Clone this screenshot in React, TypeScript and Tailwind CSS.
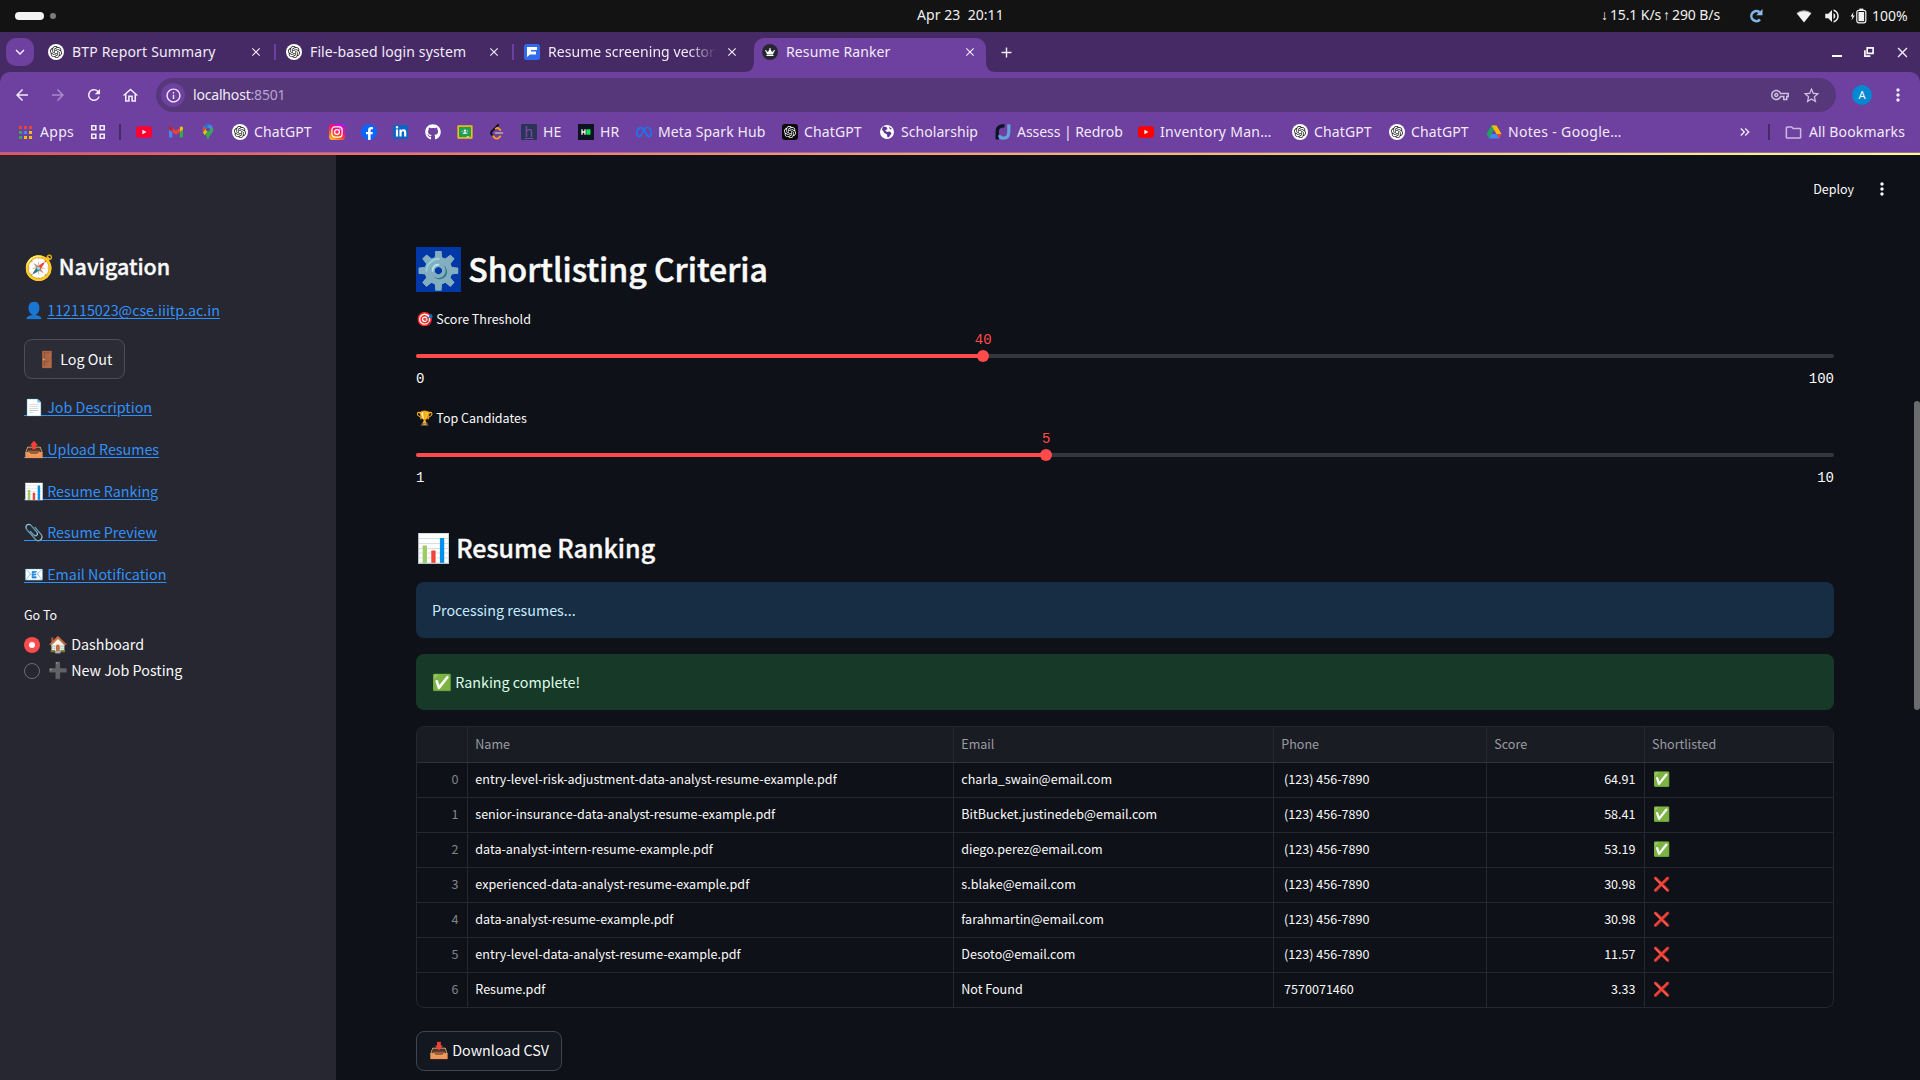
import React from "react";
import { SiOpenai, SiMeta } from "react-icons/si";
import { FaGithub, FaFacebookF, FaLinkedinIn, FaCrown } from "react-icons/fa";
import {
  MdArrowBack,
  MdArrowForward,
  MdRefresh,
  MdOutlineHome,
  MdInfoOutline,
  MdStarBorder,
  MdOutlineVpnKey,
  MdMoreVert,
  MdClose,
  MdAdd,
  MdExpandMore,
  MdVolumeUp,
  MdOutlineFolder,
  MdKeyboardDoubleArrowRight,
} from "react-icons/md";

const UI = "font-['Noto_Sans',sans-serif]";
const APP = "font-['Noto_Sans_CJK_SC',sans-serif]";

/* ---------- site icons ---------- */

function GptIcon() {
  return (
    <span className="flex size-4 shrink-0 items-center justify-center rounded-full bg-white text-[#222]">
      <SiOpenai size={12} />
    </span>
  );
}

function GptDarkIcon() {
  return (
    <span className="flex size-4 shrink-0 items-center justify-center rounded-[3px] bg-[#0b0b0b] text-white">
      <SiOpenai size={12} />
    </span>
  );
}

function FIcon() {
  return (
    <svg viewBox="0 0 16 16" className="size-4 shrink-0">
      <rect width="16" height="16" rx="2.5" fill="#2f6bea" />
      <path d="M3 3h10v3H7v1.5h5v3H6L3 13z" fill="#fff" />
    </svg>
  );
}

function YoutubeIcon({ fill }: { fill: string }) {
  return (
    <svg viewBox="0 0 16 16" className="size-4 shrink-0">
      <rect y="2.3" width="16" height="11.4" rx="2.8" fill={fill} />
      <path d="M6.4 5.7v4.6l4-2.3z" fill="#fff" />
    </svg>
  );
}

function GmailIcon() {
  return (
    <svg viewBox="0 0 16 16" className="size-4 shrink-0">
      <path d="M1 5v7.500c0 .6.4 1 1 1h2.300V7.200z" fill="#4285f4" />
      <path d="M15 5v7.500c0 .6-.4 1-1 1h-2.300V7.200z" fill="#34a853" />
      <path d="M11.700 4v4L15 5.500V4.200c0-1.500-1.600-2.200-2.700-1.300z" fill="#fbbc04" />
      <path d="M4.300 8V4L8 6.800 11.700 4v4L8 10.800z" fill="#ea4335" />
      <path d="M1 4.200v1.300L4.300 8V4l-.6-1.100C2.600 2 1 2.700 1 4.200z" fill="#c5221f" />
    </svg>
  );
}

function MapsIcon() {
  return (
    <svg viewBox="0 0 16 16" className="size-4 shrink-0">
      <path d="M8 .3a5.300 5.300 0 0 1 5.300 5.300c0 4-3.800 4.700-4.700 9.400-.1.700-1.100.7-1.200 0C6.500 10.500 2.700 9.600 2.700 5.600A5.300 5.300 0 0 1 8 .3z" fill="#34a853" />
      <path d="M3.900 2.200 6.600 4.400 2.900 7.200C2.500 5.400 2.800 3.600 3.900 2.200z" fill="#ea4335" />
      <path d="M9.500.5c-2.200-.6-4.400.2-5.600 1.700l2.600 2.200z" fill="#1a73e8" />
      <path d="M9.500.5 6.500 4.300a2 2 0 0 1 3.100 2.500l2.900-3.700A5.300 5.300 0 0 0 9.500.5z" fill="#4285f4" />
      <path d="M6.400 6.900a2 2 0 0 1 .2-2.500L3 8.500c.4 1 1 1.700 1.600 2.500l4.900-5.900a2 2 0 0 1-3.100 1.800z" fill="#fbbc04" />
      <circle cx="8" cy="5.600" r="1.900" fill="#6e40a0" />
    </svg>
  );
}

function InstagramIcon() {
  return (
    <svg viewBox="0 0 16 16" className="size-4 shrink-0">
      <defs>
        <linearGradient id="insta" x1="0.2" y1="1" x2="0.75" y2="0">
          <stop offset="0" stopColor="#ffc21f" />
          <stop offset="0.3" stopColor="#ff5a20" />
          <stop offset="0.6" stopColor="#ff0f6e" />
          <stop offset="1" stopColor="#c20fe8" />
        </linearGradient>
      </defs>
      <rect width="16" height="16" rx="3.500" fill="url(#insta)" />
      <rect x="2.900" y="2.900" width="10.200" height="10.200" rx="3" fill="none" stroke="#fff" strokeWidth="1.200" />
      <circle cx="8" cy="8" r="2.400" fill="none" stroke="#fff" strokeWidth="1.200" />
      <circle cx="10.900" cy="5.100" r=".7" fill="#fff" />
    </svg>
  );
}

function FacebookIcon() {
  return (
    <span className="flex size-4 shrink-0 items-end justify-center overflow-hidden rounded-full bg-[#0866ff] text-white">
      <FaFacebookF size={13} />
    </span>
  );
}

function LinkedinIcon() {
  return (
    <span className="flex h-[14px] w-[15px] shrink-0 items-center justify-center rounded-[1px] bg-[#0a66c2] text-white">
      <FaLinkedinIn size={12} />
    </span>
  );
}

function ClassroomIcon() {
  return (
    <svg viewBox="0 0 16 16" className="size-4 shrink-0">
      <rect x=".4" y="1.300" width="15.200" height="13.400" rx="1" fill="#fbbc04" />
      <rect x="2" y="2.900" width="12" height="10.200" fill="#1e9e58" />
      <circle cx="8" cy="6.600" r="1.200" fill="#fff" />
      <path d="M5.500 9.800c0-1 1.300-1.600 2.500-1.600s2.500.6 2.500 1.600z" fill="#fff" />
      <circle cx="5.300" cy="7.300" r=".8" fill="#8dd0ac" />
      <circle cx="10.700" cy="7.300" r=".8" fill="#8dd0ac" />
      <rect x="9.500" y="12.400" width="3" height=".8" fill="#eee" />
    </svg>
  );
}

function LeetcodeIcon() {
  return (
    <svg viewBox="0 0 16 16" className="size-4 shrink-0" fill="none" strokeLinecap="round">
      <path d="M9.200 1 2.700 7.400c-.9.9-.9 2.200 0 3.100L4 12" stroke="#111" strokeWidth="1.900" />
      <path d="M11.300 6 9.800 4.600C9 3.800 7.700 3.800 6.800 4.600" stroke="#ffa116" strokeWidth="1.800" />
      <path d="M4.200 12.200 5.700 13.800c1 1.100 2.900 1.100 4 0l1.500-1.500" stroke="#ffa116" strokeWidth="1.900" />
      <path d="M6.500 9h7" stroke="#b3b3b3" strokeWidth="1.600" />
    </svg>
  );
}

function HackerEarthIcon() {
  return (
    <span className="flex size-4 shrink-0 items-center justify-center rounded-[1px] bg-[#2c3454] text-[14px] leading-none text-[#7a4bb0] underline">
      h
    </span>
  );
}

function HackerRankIcon() {
  return (
    <svg viewBox="0 0 16 16" className="size-4 shrink-0">
      <rect width="16" height="16" fill="#0b141f" />
      <path d="M4 5.300v5.400M7 5.300v5.400M4 8h3" stroke="#fff" strokeWidth="1.300" />
      <rect x="8.300" y="5.300" width="4.200" height="5.400" fill="#1be35a" />
    </svg>
  );
}

function ScholarshipIcon() {
  return (
    <svg viewBox="0 0 16 16" className="size-4 shrink-0">
      <circle cx="8" cy="8" r="7" fill="#fff" />
      <path d="M4 2.500 7.500 3l1 2L6 6.500 8 8l3-.5 1.500 2L10 13l-1.500.5L8 10.500 5.500 9 3 5.500z" fill="#5b3590" />
      <path d="M10 2.500 13 5l-2 .5z" fill="#5b3590" />
    </svg>
  );
}

function RedrobIcon() {
  return (
    <svg viewBox="0 0 16 16" className="size-4 shrink-0" fill="none">
      <path d="M2.200 15.500V7.500C2.200 3.500 4.500 1.800 9.500 1.800" stroke="#0c1424" strokeWidth="3.400" />
      <path d="M13.800.3V8c0 4.200-2.300 6.200-5.300 6.200-2.400 0-3.800-1.300-3.800-3" stroke="#62a3dc" strokeWidth="3.200" />
    </svg>
  );
}

function DriveIcon() {
  return (
    <svg viewBox="0 0 16 16" className="size-4 shrink-0">
      <path d="M5.500 1.500h5L8 6 3 14.300.5 10z" fill="#1ea362" />
      <path d="M5.500 1.500h5l5 8.500h-5z" fill="#ffba00" />
      <path d="M5.500 10h10L13 14.500H3z" fill="#4285f4" />
      <path d="M10.700 10h4.800L13 14.300z" fill="#ea4335" />
    </svg>
  );
}

/* ---------- desktop bar ---------- */

function SystemBar() {
  return (
    <div className={`flex h-8 items-center bg-[#131313] text-[14px] text-[#f0f0f0] ${UI}`}>
      <div className="flex w-[917px] items-center gap-[6px] pl-[15px]">
        <span className="h-2 w-[29px] rounded-full bg-[#f4f4f4]" />
        <span className="size-[6px] rounded-full bg-[#7d7d7d]" />
      </div>
      <div className="w-[684px] pb-[3px] tracking-[0.050px] whitespace-pre">Apr 23  20:11</div>
      <div className="flex w-[148px] gap-[2px] pb-[3px] tracking-[-0.1px] whitespace-nowrap">
        <span>↓</span>
        <span>15.1 K/s</span>
        <span>↑</span>
        <span>290 B/s</span>
      </div>
      <svg viewBox="0 0 14 14" className="w-[14px]">
        <path d="M11 10.500A5 5 0 1 1 10.500 3.200" fill="none" stroke="#7fb2e5" strokeWidth="2.600" />
        <path d="M13.500 0v6.300H7.200z" fill="#8fbcea" />
      </svg>
      <svg viewBox="0 0 16 14" className="ml-[33px] w-4" fill="#f4f4f4">
        <path d="M8 13.500.8 4.500C4.800 1 11.200 1 15.200 4.500z" />
        <path d="M.8 4.500C4.800 1 11.200 1 15.200 4.500" fill="none" stroke="#bbb" />
      </svg>
      <MdVolumeUp size={18} className="ml-[11px]" />
      <svg viewBox="0 0 17 16" className="ml-[9px] w-[17px]">
        <path d="M3.500 4 .5 8.500h2L1.500 12.500l3.300-5h-2z" fill="#f4f4f4" />
        <rect x="6.800" y="2.300" width="9" height="12.500" rx="2" fill="none" stroke="#f4f4f4" strokeWidth="1.200" />
        <rect x="8.500" y="4" width="5.600" height="9.200" fill="#f4f4f4" />
        <rect x="9.300" y=".6" width="4" height="1.500" fill="#f4f4f4" />
      </svg>
      <span className="ml-[5px] pb-[2px]">100%</span>
    </div>
  );
}

/* ---------- browser chrome ---------- */

function TabStrip() {
  return (
    <div className="flex h-10 bg-[#462a66] pt-[6px] text-[14px] tracking-[0.12px] text-[#f1ebf7]">
      <div className="ml-[6px] flex size-7 items-center justify-center rounded-[10px] bg-[#6e40a0]">
        <MdExpandMore size={18} />
      </div>
      <div className="ml-[14px] flex h-7 w-[228px] items-center">
        <GptIcon />
        <span className="ml-2 w-[177px] pb-[2px] tracking-[0.18px]">BTP Report Summary</span>
        <MdClose size={14} className="shrink-0" />
        <span className="ml-[11px] h-4 w-[2px] bg-[#6e40a0]" />
      </div>
      <div className="ml-[10px] flex h-7 w-[228px] items-center">
        <GptIcon />
        <span className="ml-2 w-[177px] pb-[2px]">File-based login system</span>
        <MdClose size={14} className="shrink-0" />
        <span className="ml-[11px] h-4 w-[2px] bg-[#6e40a0]" />
      </div>
      <div className="ml-[10px] flex h-7 w-[220px] items-center">
        <FIcon />
        <span className="mr-[7px] ml-2 w-[170px] [mask-image:linear-gradient(to_right,black_83%,transparent_99%)] pb-[2px] tracking-[0.060px] whitespace-nowrap">
          Resume screening vector
        </span>
        <MdClose size={14} className="shrink-0" />
      </div>
      <svg viewBox="0 0 10 34" className="h-[34px] w-[10px] shrink-0">
        <path d="M0 34q10 0 10-10v10z" fill="#6e40a0" />
      </svg>
      <div className="flex h-[34px] w-[232px] shrink-0 items-center rounded-t-[10px] bg-[#6e40a0] pb-[6px] pl-2">
        <span className="flex size-4 items-center justify-center rounded-full bg-[#262730] text-white">
          <FaCrown size={10} />
        </span>
        <span className="ml-2 w-[177px] pb-[2px]">Resume Ranker</span>
        <MdClose size={14} />
      </div>
      <svg viewBox="0 0 10 34" className="h-[34px] w-[10px] shrink-0">
        <path d="M10 34q-10 0-10-10v10z" fill="#6e40a0" />
      </svg>
      <MdAdd size={17} className="mt-[6px] ml-[2px]" />
      <div className="mt-[6px] mr-[9px] ml-auto flex items-start">
        <span className="mt-[11px] h-[2px] w-[10px] bg-white" />
        <svg viewBox="0 0 11 11" className="mt-[3px] ml-[22px] w-[10px]" fill="none" stroke="#fff" strokeWidth="1.800">
          <path d="M3.500 1h6.500v6h-6.500z" />
          <path d="M1 3.500v6.500h6" />
        </svg>
        <MdClose size={17} className="ml-[20px]" />
      </div>
    </div>
  );
}

function AddressBar() {
  return (
    <div className="bg-[#462a66]">
      <div className="flex h-10 items-start rounded-t-[10px] bg-[#6e40a0] pt-[6px] text-[#f1ebf7]">
        <div className="flex h-[34px] w-[156px] items-center pl-[13px]">
          <MdArrowBack size={18} />
          <MdArrowForward size={18} className="ml-[18px] text-[#a98bcb]" />
          <MdRefresh size={18} className="ml-[18px]" />
          <MdOutlineHome size={19} className="ml-[18px]" />
        </div>
        <div className="flex h-[34px] w-[1680px] items-center rounded-full bg-[#56387a] pr-[15px] pl-[5px]">
          <span className="flex size-6 items-center justify-center rounded-full bg-[#6e40a0]">
            <MdInfoOutline size={17} />
          </span>
          <span className="ml-2 pb-[2px] text-[14px] tracking-[-0.180px]">
            localhost<span className="text-[#b8a3cf]">:8501</span>
          </span>
          <MdOutlineVpnKey size={18} className="ml-auto text-[#cdbfdd]" />
          <MdStarBorder size={19} className="ml-[13px] text-[#cdbfdd]" />
        </div>
        <span className="mt-[7px] ml-4 flex size-5 items-center justify-center rounded-full bg-[#0288d1] text-[11px] text-white">
          A
        </span>
        <MdMoreVert size={20} className="mt-[7px] ml-4" />
      </div>
    </div>
  );
}

function AppsGrid() {
  const colors = ["#ea4335", "#ea4335", "#ea4335", "#34a853", "#4285f4", "#fbbc04", "#34a853", "#fbbc04", "#fbbc04"];
  return (
    <span className="grid w-[13px] grid-cols-3 gap-[2px]">
      {colors.map((c, i) => (
        <span key={i} className="size-[3px]" style={{ backgroundColor: c }} />
      ))}
    </span>
  );
}

const bookmarks: { icon: React.ReactNode; label?: string; width: string }[] = [
  { icon: <YoutubeIcon fill="#ff0033" />, width: "w-8" },
  { icon: <GmailIcon />, width: "w-8" },
  { icon: <MapsIcon />, width: "w-8" },
  { icon: <GptIcon />, label: "ChatGPT", width: "w-[97px]" },
  { icon: <InstagramIcon />, width: "w-8" },
  { icon: <FacebookIcon />, width: "w-8" },
  { icon: <LinkedinIcon />, width: "w-8" },
  { icon: <FaGithub size={16} color="#fff" />, width: "w-8" },
  { icon: <ClassroomIcon />, width: "w-8" },
  { icon: <LeetcodeIcon />, width: "w-8" },
  { icon: <HackerEarthIcon />, label: "HE", width: "w-[57px]" },
  { icon: <HackerRankIcon />, label: "HR", width: "w-[58px]" },
  { icon: <SiMeta size={16} color="#1877f2" className="shrink-0" />, label: "Meta Spark Hub", width: "w-[146px]" },
  { icon: <GptDarkIcon />, label: "ChatGPT", width: "w-[97px]" },
  { icon: <ScholarshipIcon />, label: "Scholarship", width: "w-[116px] tracking-[0.060px]" },
  { icon: <RedrobIcon />, label: "Assess | Redrob", width: "w-[143px] tracking-[-0.050px]" },
  { icon: <YoutubeIcon fill="#ff0000" />, label: "Inventory Man…", width: "w-[154px] tracking-[0.300px]" },
  { icon: <GptIcon />, label: "ChatGPT", width: "w-[97px]" },
  { icon: <GptIcon />, label: "ChatGPT", width: "w-[97px]" },
  { icon: <DriveIcon />, label: "Notes - Google…", width: "w-[252px] tracking-[0.320px]" },
];

function BookmarksBar() {
  return (
    <div className="flex h-[41px] items-center border-b border-[#8e6cb5] bg-[#6e40a0] text-[14px] tracking-[0.120px] whitespace-nowrap text-[#f1ebf7]">
      <div className="flex w-[91px] items-center gap-2 pl-[19px]">
        <AppsGrid />
        <span className="pb-[2px] tracking-[0.300px]">Apps</span>
      </div>
      <svg viewBox="0 0 14 14" className="w-[14px]" fill="none" stroke="#f1ebf7" strokeWidth="1.600">
        <path d="M.8.8h4v4h-4zM9.200.8h4v4h-4zM.8 9.200h4v4h-4zM9.200 9.200h4v4h-4z" />
      </svg>
      <span className="mr-[13px] ml-[14px] h-4 w-[2px] bg-[#462a66]" />
      <div className="flex pl-[2px]">
        {bookmarks.map((b, i) => (
          <div key={i} className={`flex shrink-0 items-center gap-[6px] ${b.width}`}>
            {b.icon}
            {b.label && <span className="pb-[2px]">{b.label}</span>}
          </div>
        ))}
      </div>
      <MdKeyboardDoubleArrowRight size={16} className="-ml-[1px]" />
      <span className="ml-[15px] h-4 w-[2px] bg-[#462a66]" />
      <MdOutlineFolder size={19} className="ml-[14px] text-[#cbb8e0]" />
      <span className="ml-[6px] pb-[2px] tracking-[0.140px]">All Bookmarks</span>
    </div>
  );
}

/* ---------- sidebar ---------- */

const navLinks = [
  ["📄", "Job Description"],
  ["📤", "Upload Resumes"],
  ["📊", "Resume Ranking"],
  ["📎", "Resume Preview"],
  ["📧", "Email Notification"],
];

function Emoji({ children }: { children: string }) {
  return <span className="text-[16px]">{children}</span>;
}

function Sidebar() {
  return (
    <aside className="w-[336px] shrink-0 bg-[#262730] pt-[91px] pl-6 text-[14.300px] text-[#fafafa]">
      <h2 className="flex h-10 items-center text-[21.500px] font-medium whitespace-pre [-webkit-text-stroke:0.350px_#fafafa]">
        <span className="text-[24px]">🧭</span> Navigation
      </h2>
      <div className="mt-[11px] h-6 leading-6">
        <Emoji>👤</Emoji>{" "}
        <span className="text-[#3291f8] underline underline-offset-[2px]">112115023@cse.iiitp.ac.in</span>
      </div>
      <button className="mt-[18px] block h-10 w-[101px] rounded-lg border border-[#4d4e57] bg-[#2b2c36] pb-[2px] pl-3 text-left leading-[36px]">
        <Emoji>🚪</Emoji> Log Out
      </button>
      <nav className="mt-[15px] flex flex-col gap-[17.800px]">
        {navLinks.map(([icon, label]) => (
          <div key={label} className="h-6 leading-6 text-[#3291f8]">
            <span className="underline underline-offset-[2px]">
              <Emoji>{icon}</Emoji> {label}
            </span>
          </div>
        ))}
      </nav>
      <div className="mt-[19.600px] h-5 text-[12.500px] leading-5">Go To</div>
      <div className="mt-[7px] flex h-[26px] items-center">
        <span className="flex size-4 items-center justify-center rounded-full bg-[#ff4b4b]">
          <span className="size-[6px] rounded-full bg-white" />
        </span>
        <span className="ml-2 pb-[2px] leading-6">
          <Emoji>🏠</Emoji> Dashboard
        </span>
      </div>
      <div className="flex h-[26px] items-center">
        <span className="size-4 rounded-full border border-[#6a6b73]" />
        <span className="ml-2 pb-[2px] leading-6">
          <Emoji>➕</Emoji> New Job Posting
        </span>
      </div>
    </aside>
  );
}

/* ---------- main ---------- */

function Slider(p: { icon: string; label: string; value: string; min: string; max: string; percent: number }) {
  return (
    <div className="h-[98px]">
      <div className="h-5 text-[12.500px] leading-5">
        <span className="mr-[0.500px] text-[14px]">{p.icon}</span> {p.label}
      </div>
      <div className="relative mt-[26px] h-1 rounded-full bg-[#35373f]">
        <div className="h-1 rounded-full bg-[#ff4b4b]" style={{ width: `${p.percent}%` }} />
        <div
          className="absolute -top-1 size-3 -translate-x-1/2 rounded-full bg-[#ff4b4b]"
          style={{ left: `${p.percent}%` }}
        />
        <div
          className="absolute -top-6 -translate-x-1/2 font-['Liberation_Mono',monospace] text-[14px] leading-5 text-[#ff4b4b]"
          style={{ left: `${p.percent}%` }}
        >
          {p.value}
        </div>
      </div>
      <div className="mt-[11px] flex justify-between font-['Liberation_Mono',monospace] text-[14px] leading-5">
        <span>{p.min}</span>
        <span>{p.max}</span>
      </div>
    </div>
  );
}

const rows: [string, string, string, string, boolean][] = [
  ["entry-level-risk-adjustment-data-analyst-resume-example.pdf", "charla_swain@email.com", "(123) 456-7890", "64.91", true],
  ["senior-insurance-data-analyst-resume-example.pdf", "BitBucket.justinedeb@email.com", "(123) 456-7890", "58.41", true],
  ["data-analyst-intern-resume-example.pdf", "diego.perez@email.com", "(123) 456-7890", "53.19", true],
  ["experienced-data-analyst-resume-example.pdf", "s.blake@email.com", "(123) 456-7890", "30.98", false],
  ["data-analyst-resume-example.pdf", "farahmartin@email.com", "(123) 456-7890", "30.98", false],
  ["entry-level-data-analyst-resume-example.pdf", "Desoto@email.com", "(123) 456-7890", "11.57", false],
  ["Resume.pdf", "Not Found", "7570071460", "3.33", false],
];

const GRID = "grid grid-cols-[51px_486px_320px_213px_158px_1fr]";
const CELL = "flex items-center border-r border-[#26282e] pr-[8.500px] pl-[7.300px]";

function RankingTable() {
  return (
    <div className="mt-4 h-[282px] overflow-hidden rounded-lg border border-[#26282e] text-[12.550px]">
      <div className={`${GRID} h-9 border-b border-[#30323a] bg-[#1a1c24] text-[#9a9ba1]`}>
        <div className={CELL} />
        <div className={CELL}>Name</div>
        <div className={CELL}>Email</div>
        <div className={CELL}>Phone</div>
        <div className={CELL}>Score</div>
        <div className="flex items-center pl-[7px]">Shortlisted</div>
      </div>
      {rows.map(([name, email, phone, score, ok], i) => (
        <div key={name} className={`${GRID} h-[35px] border-b border-[#26282e]`}>
          <div className={`${CELL} justify-end pb-[2px] text-[#83848a]`}>{i}</div>
          <div className={`${CELL} pb-[2px]`}>{name}</div>
          <div className={`${CELL} pb-[2px]`}>{email}</div>
          <div className={`${CELL} pb-[2px] whitespace-pre`}>{" " + phone}</div>
          <div className={`${CELL} justify-end pb-[2px]`}>{score}</div>
          <div className="flex items-center pb-[4px] pl-[7.500px] text-[14px]">{ok ? "✅" : "❌"}</div>
        </div>
      ))}
    </div>
  );
}

function Main() {
  return (
    <main className="relative flex-1 bg-[#0e1117] text-[14.300px] text-[#fafafa]">
      <div className="flex h-[68px] items-center justify-end pr-[28px] text-[12.500px]">
        Deploy
        <MdMoreVert size={20} className="ml-[18px]" />
      </div>
      <div className="mt-[19px] ml-20 w-[1418px]">
        <h1 className="flex h-[54px] items-center text-[32px] font-medium whitespace-pre [-webkit-text-stroke:0.500px_#fafafa]">
          <span className="h-[45px] bg-[#0038a8] text-[36px] leading-[41px]">⚙️</span>
          <span className="pb-[2px]"> Shortlisting Criteria</span>
        </h1>
        <div className="mt-3 flex flex-col gap-px">
          <Slider icon="🎯" label="Score Threshold" value="40" min="0" max="100" percent={40} />
          <Slider icon="🏆" label="Top Candidates" value="5" min="1" max="10" percent={44.44} />
        </div>
        <h2 className="mt-[21px] flex h-11 items-center text-[25px] font-medium whitespace-pre [-webkit-text-stroke:0.400px_#fafafa]">
          <span className="pb-[4px] text-[28px]">📊</span>
          <span className="-ml-[0.500px]"> Resume Ranking</span>
        </h2>
        <div className="mt-3 h-14 rounded-lg bg-[#172d43] px-4 leading-[56px] text-[#c7ebff]">Processing resumes...</div>
        <div className="mt-4 h-14 rounded-lg bg-[#173928] px-4 leading-[54px] text-[#dffde9]">
          <Emoji>✅</Emoji> Ranking complete!
        </div>
        <RankingTable />
        <button className="mt-[23px] block h-10 w-[146px] rounded-lg border border-[#41444c] bg-[#131720] pb-[4px] pl-3 text-left leading-[34px]">
          <Emoji>📥</Emoji> Download CSV
        </button>
      </div>
      <div className="absolute top-[246px] right-0 h-[309px] w-[6px] rounded-full bg-[#6b6c70]" />
    </main>
  );
}

export default function App() {
  return (
    <div className="flex h-[1080px] w-[1920px] flex-col overflow-hidden bg-[#0e1117]">
      <SystemBar />
      <div className={UI}>
        <TabStrip />
        <AddressBar />
        <BookmarksBar />
      </div>
      <div className="h-[2px] bg-[linear-gradient(90deg,#ff4b4b,#fffd80)]" />
      <div className={`flex flex-1 ${APP}`}>
        <Sidebar />
        <Main />
      </div>
    </div>
  );
}
